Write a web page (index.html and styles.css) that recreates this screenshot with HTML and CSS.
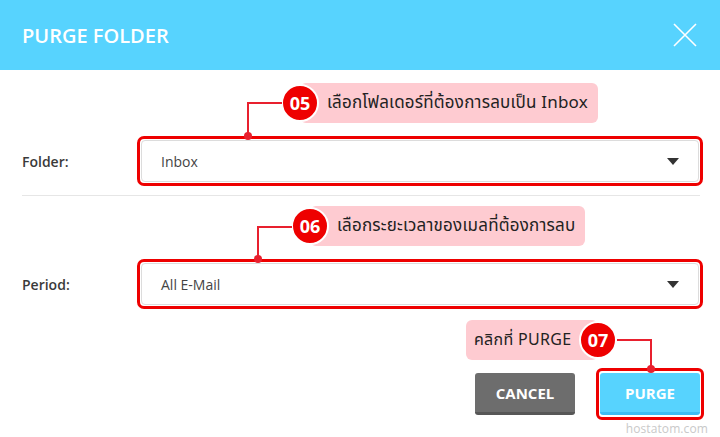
FILE: index.html
```html
<!DOCTYPE html>
<html lang="th">
<head>
<meta charset="utf-8">
<title>Purge Folder</title>
<link rel="stylesheet" href="styles.css">
</head>
<body>
<div class="dialog">
  <header class="dlg-head">
    <h1 class="dlg-title">PURGE FOLDER</h1>
    <button class="dlg-close" aria-label="Close">
      <svg width="24" height="24" viewBox="0 0 24 24"><path d="M1 1L23 23M23 1L1 23" stroke="#fff" stroke-width="1.6" fill="none"/></svg>
    </button>
  </header>
  <div class="dlg-body">
    <div class="field field-folder">
      <label class="field-label">Folder:</label>
      <div class="hl">
        <div class="select"><span>Inbox</span><span class="caret"></span></div>
      </div>
      <div class="callout callout-05"><span class="num">05</span>เลือกโฟลเดอร์ที่ต้องการลบเป็น Inbox</div>
      <div class="connector conn-05"></div>
    </div>
    <div class="field field-period">
      <label class="field-label">Period:</label>
      <div class="hl">
        <div class="select"><span>All E-Mail</span><span class="caret"></span></div>
      </div>
      <div class="callout callout-06"><span class="num">06</span>เลือกระยะเวลาของเมลที่ต้องการลบ</div>
      <div class="connector conn-06"></div>
    </div>
    <div class="actions">
      <button class="btn btn-cancel">CANCEL</button>
      <div class="hl hl-btn"><button class="btn btn-purge">PURGE</button></div>
      <div class="callout callout-07">คลิกที่ PURGE<span class="num">07</span></div>
      <div class="connector conn-07"></div>
    </div>
  </div>
  <div class="watermark">hostatom.com</div>
</div>
</body>
</html>
```
FILE: styles.css
```css
* { box-sizing: border-box; }
html, body { margin: 0; padding: 0; }
body {
  width: 720px;
  height: 437px;
  overflow: hidden;
  background: #fff;
  font-family: "Open Sans", "Noto Sans", "Noto Sans Thai", sans-serif;
  color: #333;
}
.dialog { position: relative; width: 720px; height: 437px; }
.dlg-head {
  height: 70px;
  background: #57d3fe;
  display: flex;
  align-items: center;
  justify-content: space-between;
  padding: 0 23px 0 22px;
}
.dlg-title {
  margin: 0;
  color: #fff;
  font-size: 20px;
  font-weight: 600;
  letter-spacing: 0;
}
.dlg-close {
  border: 0;
  background: none;
  padding: 0;
  width: 24px;
  height: 24px;
  display: block;
}
.dlg-close svg { display: block; }
.dlg-body { padding: 0 17px 0 22px; }
.field {
  position: relative;
  display: grid;
  grid-template-columns: 115px 1fr;
  align-items: center;
}
.field-folder { padding: 66px 0 9px; border-bottom: 1px solid #e6e6e6; margin-right: 3px; }
.field-folder .hl { margin-right: -3px; }
.field-period { padding-top: 63px; }
.field-label {
  font-size: 14px;
  font-weight: 600;
  color: #3a3a3a;
}
.hl {
  border: 3px solid #ee0000;
  border-radius: 7px;
  padding: 1px;
}
.select {
  height: 42px;
  border: 1px solid #dcdcdc;
  border-radius: 4px;
  display: flex;
  align-items: center;
  justify-content: space-between;
  padding: 0 19px 0 19px;
  font-size: 14px;
  color: #444;
}
.caret {
  width: 0; height: 0;
  border-left: 6px solid transparent;
  border-right: 6px solid transparent;
  border-top: 7px solid #333;
}
.callout {
  position: absolute;
  height: 40px;
  background: #fecbd1;
  border-radius: 6px;
  display: flex;
  align-items: center;
  font-size: 17px;
  letter-spacing: 0.2px;
  color: #222;
  white-space: nowrap;
  font-family: "Noto Sans", "Noto Sans Thai", "Open Sans", sans-serif;
}
.num {
  position: absolute;
  top: 50%;
  width: 38px;
  height: 38px;
  margin-top: -19px;
  border-radius: 50%;
  background: #ee0000;
  border: 2px solid #fff;
  color: #fff;
  font-family: "Open Sans", sans-serif;
  font-weight: 700;
  font-size: 18px;
  letter-spacing: 0;
  display: flex;
  align-items: center;
  justify-content: center;
}
.callout-05 { left: 278px; top: 13px; padding: 0 10px 0 27px; }
.callout-05 .num { left: -19px; }
.callout-06 { left: 288px; top: 10px; padding: 0 10px 0 27px; }
.callout-06 .num { left: -19px; }
.callout-07 { left: 444px; top: 11px; width: 132px; padding: 0 0 0 8px; font-size: 16px; letter-spacing: 0.3px; }
.callout-07 .num { right: -19px; }
.connector {
  position: absolute;
  border-top: 2px solid #e8202e;
}
.connector::after {
  content: "";
  position: absolute;
  bottom: -4px;
  width: 8px;
  height: 8px;
  border-radius: 50%;
  background: #e8202e;
}
.conn-05 { left: 225px; top: 32px; width: 35px; height: 34px; border-left: 2px solid #e8202e; }
.conn-05::after { left: -5px; }
.conn-06 { left: 235px; top: 30px; width: 35px; height: 33px; border-left: 2px solid #e8202e; }
.conn-06::after { left: -5px; }
.conn-07 { left: 595px; top: 30px; width: 35px; height: 30px; border-right: 2px solid #e8202e; }
.conn-07::after { right: -5px; }
.actions {
  position: relative;
  display: flex;
  justify-content: flex-end;
  align-items: center;
  gap: 21px;
  padding-top: 59px;
  margin-right: -1px;
}
.btn {
  width: 100px;
  height: 42px;
  border: 0;
  border-radius: 3px;
  color: #fff;
  font-family: "Open Sans", sans-serif;
  font-weight: 700;
  font-size: 15px;
  padding: 0;
}
.btn-cancel { background: #6d6d6d; border-bottom: 3px solid #575757; }
.btn-purge { background: #57d3fe; border-bottom: 3px solid #3dbdf3; display: block; }
.hl-btn { border-radius: 6px; padding: 2px 1px; }
.watermark {
  position: absolute;
  right: 12px;
  bottom: 0;
  font-size: 12px;
  color: #c9c9c9;
  letter-spacing: 0.1px;
  font-family: "Open Sans", sans-serif;
}
```
